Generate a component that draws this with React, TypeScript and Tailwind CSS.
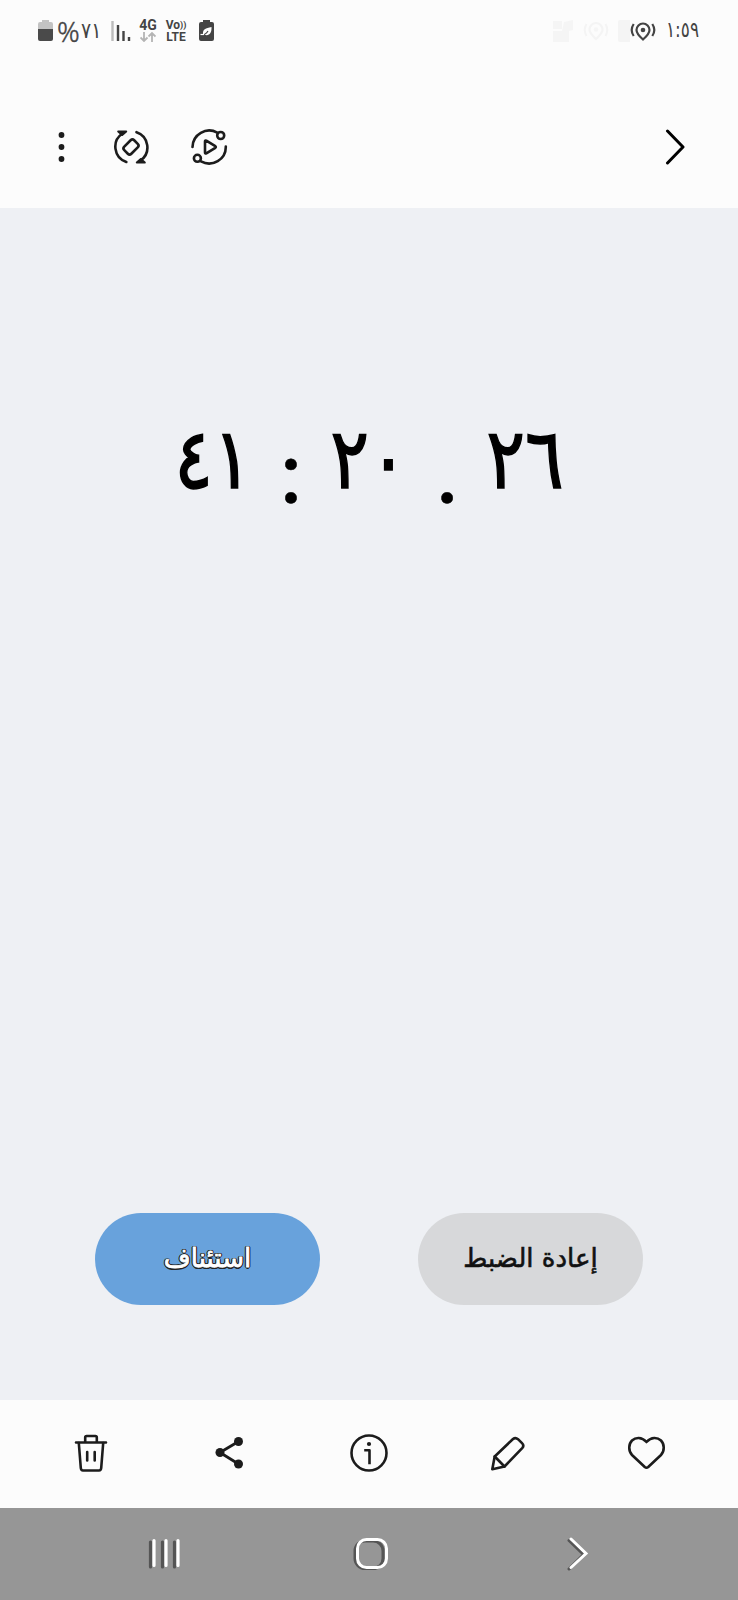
import type { ReactNode } from 'react';


const StatusBar = () => (
    <div className="flex h-[60px] items-center justify-between pl-[38px] pr-[39px] pt-[2px] text-[#444]">
        <div className="flex items-center">
            {/* battery */}
            <svg width="15" height="22" viewBox="0 0 15 22">
                <path d="M4 0h7v2h2q2 0 2 2v5H0V4q0-2 2-2h2z" fill="#c3c3c3" />
                <path d="M0 9h15v10q0 2-2 2H2q-2 0-2-2z" fill="#4a4a4a" />
            </svg>
            <span className="ml-[4px] w-[24px] font-['Noto_Sans'] text-[28px] font-light leading-[28px] [-webkit-text-stroke:0.4px_#444]">%</span>
            <span className="w-[23px] origin-left scale-x-[0.86] whitespace-nowrap font-['DejaVu_Sans'] text-[22px] leading-[26px]">٧١</span>
            {/* signal */}
            <svg className="ml-[7px]" width="20" height="20" viewBox="0 0 20 20">
                <path d="M1.500 0v20" stroke="#bcbcbc" strokeWidth="2.400" />
                <path d="M7 4v16M12.500 10v10M18 16v4" stroke="#444" strokeWidth="2.400" />
            </svg>
            <div className="ml-[8px] flex w-[18px] flex-col items-center">
                <span className="font-[Roboto] text-[14px] font-bold leading-[11px]">4G</span>
                <svg width="16" height="11" viewBox="0 0 16 11" fill="none" stroke="#b4b4b4" strokeWidth="1.800">
                    <path d="M4 1v9M0.500 6.500L4 10l3.500-3.500M12 11V2M8.500 5.500L12 2l3.500 3.500" />
                </svg>
            </div>
            <div className="ml-[8px] flex w-[22px] flex-col items-center font-[Roboto] font-bold">
                <span className="flex h-[11px] items-center text-[12px] leading-[11px]">
                    Vo<span className="text-[9px] leading-[9px]">))</span>
                </span>
                <span className="h-[12px] text-[12px] leading-[12px]">LTE</span>
            </div>
            {/* power saving */}
            <svg className="ml-[12px]" width="15" height="22" viewBox="0 0 15 22">
                <path d="M4 0h7v2h2q2 0 2 2v15q0 2-2 2H2q-2 0-2-2V4q0-2 2-2h2z" fill="#444" />
                <path d="M12.500 7c-6 1-9 2.500-8.500 7c5 3 9 0 8.500-7z" fill="#fff" />
                <path d="M1.500 15.200q5 0 7.500-4.200" stroke="#444" strokeWidth="1.200" fill="none" />
                <path d="M1.500 14.500h3.500" stroke="#fff" strokeWidth="1.200" fill="none" />
            </svg>
        </div>
        <div className="flex items-center">
            <svg width="60" height="22" viewBox="0 0 60 22" fill="#f5f5f5">
                <path d="M0 1h9v8H0zM11 2l9-2v10l-4 1v11H0V11h9z" />
                <path d="M43 19C39 15 36.500 13 36.500 9.500a6.500 6.500 0 0 1 13 0c0 3.500-2.500 5.500-6.500 9.500z" fill="none" stroke="#f4f4f4" strokeWidth="2.200" />
                <circle cx="43" cy="9.500" r="2.200" />
                <path d="M33.500 4q-3.500 6 0 12M52.500 4q3.500 6 0 12" fill="none" stroke="#f4f4f4" strokeWidth="2" />
            </svg>
            <svg className="ml-[5px]" width="12" height="22" viewBox="0 0 12 22" fill="#f4f4f4">
                <rect width="14" height="22" rx="2" />
            </svg>
            <LocationIcon />
            <span className="ml-[10px] w-[33px] origin-left scale-x-[0.77] whitespace-nowrap pb-[2px] font-['DejaVu_Sans'] text-[22px] leading-[26px]">١:٥٩</span>
        </div>
    </div>
);

const LocationIcon = () => (
    <svg width="26" height="22" viewBox="0 0 26 22" fill="none" stroke="#444" strokeWidth="2.200">
        <path d="M13 19.500C9 16 6.500 13.500 6.500 10a6.500 6.500 0 0 1 13 0c0 3.500-2.500 6-6.500 9.500z" />
        <circle cx="13" cy="10" r="2.300" fill="#444" stroke="none" />
        <path d="M3.700 4q-4 6 0 12M22.300 4q4 6 0 12" />
    </svg>
);

const Icon = ({ w, h, children, className = '' }: { w: number; h: number; children: ReactNode; className?: string }) => (
    <svg
        className={className}
        width={w}
        height={h}
        viewBox={`0 0 ${w} ${h}`}
        fill="none"
        stroke="#1c1c1c"
        strokeWidth="2.600"
        strokeLinecap="round"
        strokeLinejoin="round"
    >
        {children}
    </svg>
);

const TopBar = () => (
    <div className="flex h-[148px] items-center pl-[57px] pr-[53px] pt-[26px]">
        <Icon w={9} h={36}>
            <g fill="#1c1c1c" stroke="none">
                <circle cx="4.500" cy="6" r="2.900" />
                <circle cx="4.500" cy="18" r="2.900" />
                <circle cx="4.500" cy="30" r="2.900" />
            </g>
        </Icon>
        {/* rotate */}
        <Icon w={36} h={36} className="ml-[47px]">
            <path d="M9.500 4.500A16 16 0 0 0 13.300 33M23.500 3.200A16 16 0 0 1 27.500 31.500" />
            <path d="M5.200 2.500h8L9.200 6zM31.800 33.500h-8l4-3.500z" fill="#1c1c1c" strokeWidth="2" />
            <rect x="11" y="13" width="14" height="10" rx="2.500" transform="rotate(-45 18 18)" />
        </Icon>
        {/* motion */}
        <Icon w={38} h={38} className="ml-[41px]">
            <path d="M2.500 19A16.700 16.700 0 0 1 27.300 4.600M35.800 18.500A16.700 16.700 0 0 1 11 33.400" />
            <circle cx="30.700" cy="7.500" r="3.500" />
            <circle cx="7.400" cy="30.300" r="3.500" />
            <path d="M15 13.500v11q0 1.500 1.300.8l9-5.500q1-.8 0-1.600l-9-5.500q-1.300-.7-1.300.8z" />
        </Icon>
        <Icon w={20} h={36} className="ml-auto">
            <path d="M2.500 2L18 18L2.500 34" stroke="#000" strokeWidth="3" />
        </Icon>
    </div>
);

const Timer = () => (
    <div className="flex h-[100px] items-center font-['DejaVu_Sans'] text-[84px] leading-[100px] text-black">
        <Digits>٤١</Digits>
        <Separator>:</Separator>
        <Digits>٢٠</Digits>
        <Separator>.</Separator>
        <Digits>٢٦</Digits>
    </div>
);

const Digits = ({ children }: { children: ReactNode }) => (
    <span className="mt-[-8px] flex w-[86px] scale-x-[0.86] justify-center [-webkit-text-stroke:1.5px_#000]">{children}</span>
);

const Separator = ({ children }: { children: ReactNode }) => (
    <span className="mt-[10px] w-[70px] text-center font-[Lato] text-[90px] [-webkit-text-stroke:0.5px_#000]">{children}</span>
);

const ActionBar = () => (
    <div className="grid h-[108px] grid-cols-5 place-items-center bg-[#fcfcfc] pb-[3px] pl-[22px] pr-[22px]">
        <Icon w={36} h={42}>
            <path d="M3 10.500h30M12.200 10V5.500q0-1.500 1.500-1.500h8.600q1.500 0 1.500 1.500V10" />
            <path d="M5.800 11l2 25q.2 2.500 2.200 2.500h16q2 0 2.200-2.500l2-25M14.200 20v8.500M21.700 20v8.500" />
        </Icon>
        <Icon w={34} h={38}>
            <path d="M25.500 7.500L7 18.500L25.500 30" strokeWidth="2.800" />
            <g fill="#1c1c1c" stroke="none">
                <circle cx="25.500" cy="7.500" r="4.500" />
                <circle cx="7" cy="18.500" r="4.500" />
                <circle cx="25.500" cy="30" r="4.500" />
            </g>
        </Icon>
        <Icon w={40} h={40}>
            <circle cx="20" cy="20" r="17.500" />
            <circle cx="20" cy="11" r="2.100" fill="#1c1c1c" stroke="none" />
            <path d="M16.500 17.200h4V30" strokeLinecap="square" />
        </Icon>
        <Icon w={38} h={38}>
            <path d="M3.300 35.200L5.700 22.500L24 5q2.500-2 5 .2l4 4q2.500 2.500.2 5L15.500 32.500z" />
            <path d="M5.700 22.500L15.500 32.500" />
        </Icon>
        <Icon w={40} h={38}>
            <path d="M19.500 8C14.500 2.500 8.500 3.300 5 6.500C1.500 10 1.200 17 5 21L17.800 33Q19.500 34.500 21.200 33L34 21C37.800 17 37.500 10 34 6.500C30.500 3.300 24.500 2.500 19.500 8z" />
        </Icon>
    </div>
);

const NavBar = () => (
    <div className="flex h-[92px] items-center bg-[#969696] pb-[1px] pl-[146px]">
        <svg width="36" height="34" viewBox="0 0 36 34" strokeWidth="3.200" strokeLinecap="round">
            <path d="M4.500 5v25M16.500 5v25M28.500 5v25" stroke="#555" />
            <path d="M8 3.500v25M20 3.500v25M32 3.500v25" stroke="#fff" />
        </svg>
        <svg className="ml-[167px]" width="40" height="34" viewBox="0 0 40 34" fill="none" strokeWidth="3">
            <rect x="6" y="4" width="28" height="27.500" rx="10" stroke="#555" />
            <rect x="8.500" y="2.500" width="29" height="28" rx="9" stroke="#fff" />
        </svg>
        <svg className="ml-[177px]" width="24" height="34" viewBox="0 0 24 34" fill="none" strokeWidth="3" strokeLinecap="round">
            <path d="M3 3.500L17.500 17.500L3 32" stroke="#555" />
            <path d="M5 2L20 16.500L5 30.500" stroke="#fff" />
        </svg>
    </div>
);

const App = () => {
    return (
        <div className="flex h-[1600px] w-[738px] flex-col overflow-hidden bg-[#fcfcfc]">
            <StatusBar />
            <TopBar />
            <main className="flex h-[1192px] flex-col items-center justify-between bg-[#eef0f4] pb-[95px] pt-[205px]">
                <Timer />
                <div className="flex gap-[98px] font-['DejaVu_Sans'] text-[26px]">
                    <button
                        dir="rtl"
                        className="h-[92px] w-[225px] rounded-full bg-[#68a2dc] pb-[2px] text-white [-webkit-text-stroke:0.8px_#fff] [text-shadow:1.5px_0_#222,-1.5px_0_#222,0_1.5px_#222,0_-1.5px_#222,1px_1px_#222,-1px_-1px_#222,1px_-1px_#222,-1px_1px_#222]"
                    >
                        استئناف
                    </button>
                    <button dir="rtl" className="h-[92px] w-[225px] rounded-full bg-[#d7d8da] pb-[2px] text-[#111] [-webkit-text-stroke:0.6px_#111]">
                        إعادة الضبط
                    </button>
                </div>
            </main>
            <ActionBar />
            <NavBar />
        </div>
    );
};

export default App;
